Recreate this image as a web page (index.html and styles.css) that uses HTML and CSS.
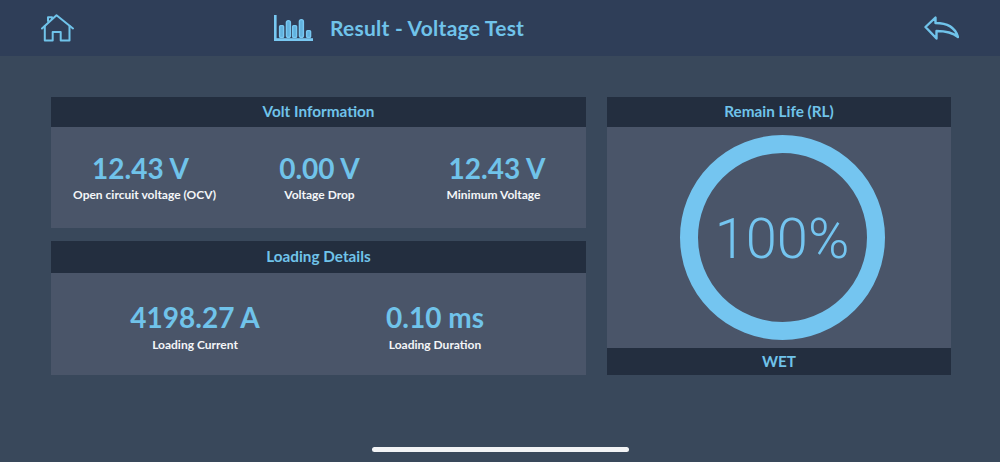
FILE: index.html
```html
<!DOCTYPE html>
<html lang="en">
<head>
  <meta charset="UTF-8" />
  <meta name="viewport" content="width=device-width, initial-scale=1.0" />
  <title>Result - Voltage Test</title>
  <link rel="stylesheet" href="styles.css">
</head>
<body>
  <header class="topbar">
    <svg class="icon-home" width="34" height="30" viewBox="0 0 34 30" fill="none" stroke="#70c3ea" stroke-width="2" stroke-linejoin="round" stroke-linecap="round">
      <path d="M2 14.5 L16.5 1.3 L33 14.5" />
      <path d="M4.8 12 V26.5 H12.7 V18 H20.7 V26.5 H29.5 V12" />
      <path d="M8 7 V3.2 H12 V4.8" />
    </svg>
    <div class="title">
      <svg class="icon-chart" width="40" height="27" viewBox="0 0 40 27">
        <rect x="0" y="0" width="2.6" height="26" fill="#78c8f2" />
        <rect x="0" y="23.2" width="39" height="2.8" fill="#78c8f2" />
        <g fill="#62b2de" stroke="#78c8f2" stroke-width="1.4">
          <rect x="5.6" y="10.6" width="4" height="11.8" rx="1" />
          <rect x="12.4" y="5.6" width="4" height="16.8" rx="2" />
          <rect x="18.6" y="10.6" width="4" height="11.8" rx="1" />
          <rect x="25.4" y="4.6" width="4" height="17.8" rx="2" />
          <rect x="32.6" y="15.6" width="4" height="6.8" rx="1" />
        </g>
      </svg>
      <h1>Result - Voltage Test</h1>
    </div>
    <svg class="icon-back" width="36" height="24" viewBox="0 0 36 24" fill="none" stroke="#70c3ea" stroke-width="2.4" stroke-linejoin="round" stroke-linecap="round">
      <path d="M2.5 11 L12.5 1.5 V7 C23 7 32 11 35 21 C29 16 22 15 13.5 15 V22.5 Z" />
    </svg>
  </header>

  <main class="content">
    <div class="left">
      <section class="panel panel-volt">
        <h2 class="panel-head">Volt Information</h2>
        <div class="stats stats-volt">
          <div class="stat stat-first"><strong>12.43 V</strong><span>Open circuit voltage (OCV)</span></div>
          <div class="stat"><strong>0.00 V</strong><span>Voltage Drop</span></div>
          <div class="stat stat-last"><strong>12.43 V</strong><span>Minimum Voltage</span></div>
        </div>
      </section>
      <section class="panel panel-loading">
        <h2 class="panel-head head-tall">Loading Details</h2>
        <div class="stats stats-loading">
          <div class="stat"><strong>4198.27 A</strong><span>Loading Current</span></div>
          <div class="stat"><strong>0.10 ms</strong><span>Loading Duration</span></div>
        </div>
      </section>
    </div>

    <section class="panel panel-life">
      <h2 class="panel-head">Remain Life (RL)</h2>
      <div class="ring-wrap">
        <div class="ring">100%</div>
      </div>
      <div class="panel-foot">WET</div>
    </section>
  </main>

  <div class="home-bar"></div>
</body>
</html>
```

FILE: styles.css
```css
:root {
  --bg-color: #39485b;
  --bar-color: #2f3e58;
  --head-color: #232e3f;
  --panel-color: #4a5569;
  --blue: #70c3ea;
}

* {
  box-sizing: border-box;
}

body {
  margin: 0;
  height: 462px;
  overflow: hidden;
  background-color: var(--bg-color);
  font-family: 'Lato', sans-serif;
  display: flex;
  flex-direction: column;
  align-items: stretch;
}

.topbar {
  height: 56px;
  background-color: var(--bar-color);
  display: flex;
  align-items: center;
  padding: 0 41px 0 40px;
  flex-shrink: 0;
}

.icon-home {
  margin-top: 2px;
}

.title {
  display: flex;
  align-items: center;
  margin-left: 200px;
  gap: 16px;
}

.title h1 {
  margin: 0 0 2px;
  font-size: 21px;
  font-weight: 700;
  color: var(--blue);
  letter-spacing: 0.25px;
}

.icon-back {
  margin-left: auto;
}

.content {
  display: flex;
  gap: 21px;
  padding: 41px 49px 0 51px;
}

.left {
  width: 535px;
  display: flex;
  flex-direction: column;
  gap: 13px;
}

.panel {
  background-color: var(--panel-color);
  display: flex;
  flex-direction: column;
}

.panel-head {
  margin: 0;
  height: 30px;
  background-color: var(--head-color);
  color: var(--blue);
  font-size: 15.3px;
  font-weight: 700;
  text-align: center;
  line-height: 29px;
}

.head-tall {
  height: 32px;
  line-height: 30px;
}

.panel-volt {
  height: 131px;
}

.panel-loading {
  height: 134px;
}

.stats {
  flex: 1;
  display: grid;
  text-align: center;
}

.stats-volt {
  grid-template-columns: 187px 163px 185px;
  padding-top: 25px;
}

.stats-loading {
  grid-template-columns: 288px 192px;
  padding-top: 28px;
}

.stat strong {
  display: block;
  color: var(--blue);
  font-size: 28px;
  line-height: 32px;
  font-weight: 700;
}

.stat span {
  display: block;
  color: #f4f6f8;
  font-size: 12px;
  line-height: 16px;
  font-weight: 700;
  margin-top: 3px;
}

.stats-loading .stat span {
  margin-top: 4px;
}

.stat-first strong {
  padding-right: 8px;
}

.stat-last strong {
  padding-left: 7px;
}

.panel-life {
  width: 344px;
  height: 278px;
}

.ring-wrap {
  flex: 1;
  display: flex;
  justify-content: center;
  align-items: center;
  padding-left: 6px;
}

.ring {
  width: 205px;
  height: 205px;
  border: 18px solid #74c5f0;
  border-radius: 50%;
  display: flex;
  align-items: center;
  justify-content: center;
  color: #74c5f0;
  font-family: 'Roboto', sans-serif;
  font-size: 56px;
  font-weight: 300;
  padding-top: 3px;
}

.panel-foot {
  height: 27px;
  background-color: var(--head-color);
  color: var(--blue);
  font-size: 15.3px;
  font-weight: 700;
  text-align: center;
  line-height: 26px;
}

.home-bar {
  width: 257px;
  height: 5px;
  border-radius: 3px;
  background-color: #f2f3f5;
  margin: 72px auto 0;
  flex-shrink: 0;
}
```
